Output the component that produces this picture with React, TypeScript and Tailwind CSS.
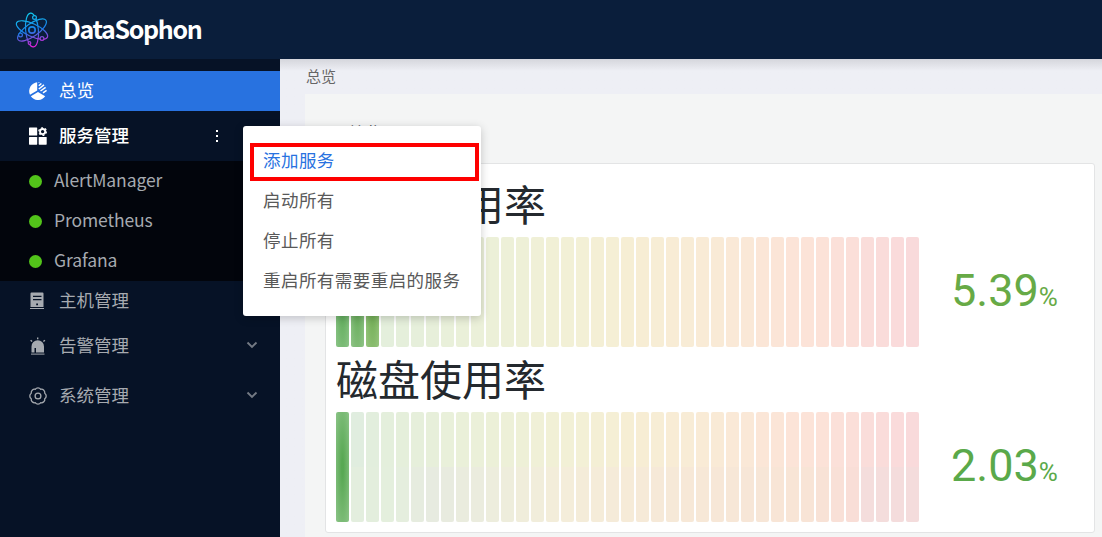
import type { ReactNode } from "react";

const CELL_COUNT = 39;

const TRACK = [
	[0, 222, 236, 224],
	[3, 228, 239, 220],
	[10, 236, 240, 216],
	[15, 242, 240, 214],
	[19, 246, 238, 212],
	[24, 249, 235, 214],
	[31, 252, 227, 216],
	[36, 250, 220, 218],
	[38, 249, 218, 219],
];

const TRACK_LOW = [
	[0, 226, 237, 222],
	[3, 228, 239, 221],
	[6, 231, 235, 224],
	[11, 238, 237, 220],
	[14, 243, 237, 218],
	[20, 246, 234, 216],
	[31, 248, 228, 214],
	[34, 249, 222, 215],
	[35, 244, 221, 220],
	[38, 244, 220, 220],
];

const LIT = [
	["#58a853", "#8cc487"],
	["#60a851", "#90c488"],
	["#69a94c", "#98c57e"],
];

const colorAt = (stops: number[][], index: number) => {
	const next = stops.findIndex((stop) => stop[0] >= index);
	const b = stops[next];
	const a = stops[Math.max(next - 1, 0)];
	const t = b[0] === a[0] ? 0 : (index - a[0]) / (b[0] - a[0]);
	const mix = [1, 2, 3].map((c) => Math.round(a[c] + (b[c] - a[c]) * t));
	return `rgb(${mix.join(",")})`;
};

const cellBackground = (index: number, lit: number, split: boolean) => {
	if (index < lit) {
		return `radial-gradient(${LIT[index][0]} 10%, ${LIT[index][1]})`;
	}
	const top = colorAt(TRACK, index);
	const low = split ? colorAt(TRACK_LOW, index) : top;
	return `linear-gradient(${top} 50%, ${low} 50%)`;
};

const Gauge = ({
	title,
	value,
	lit,
	split = false,
	color,
}: {
	title: string;
	value: string;
	lit: number;
	split?: boolean;
	color: string;
}) => {
	return (
		<div className="h-[175px]">
			<h3 className="h-[65px] text-[42px] leading-[61px] text-[#24292e]">
				{title}
			</h3>
			<div className="flex h-[110px]">
				<div className="flex gap-0.5">
					{Array.from({ length: CELL_COUNT }, (_, index) => (
						<div
							key={index}
							className="h-full w-[13px] rounded-xs"
							style={{ background: cellBackground(index, lit, split) }}
						/>
					))}
				</div>
				<div
					className="flex items-center pb-1 pl-8 font-[Roboto,sans-serif]"
					style={{ color }}
				>
					<div className="leading-none whitespace-nowrap">
						<span className="text-[45px]">{value}</span>
						<span className="text-[26px]">%</span>
					</div>
				</div>
			</div>
		</div>
	);
};

const Logo = () => (
	<svg width="36" height="38" viewBox="0 0 36 38" fill="none">
		<defs>
			<linearGradient id="atom" gradientUnits="userSpaceOnUse" x1="14" y1="2" x2="22" y2="36">
				<stop offset="0" stopColor="#12d0f2" />
				<stop offset="0.5" stopColor="#187fe8" />
				<stop offset="0.7" stopColor="#6657dc" />
				<stop offset="1" stopColor="#f51bdc" />
			</linearGradient>
			<mask id="orbits" maskUnits="userSpaceOnUse" x="0" y="0" width="36" height="38">
				<g stroke="#fff" strokeWidth="1.2">
					<ellipse cx="18" cy="19" rx="6.4" ry="17" transform="rotate(-5 18 19)" />
					<ellipse cx="18" cy="19" rx="6.4" ry="17" transform="rotate(55 18 19)" />
					<ellipse cx="18" cy="19" rx="6.4" ry="17" transform="rotate(115 18 19)" />
					<circle cx="18" cy="19" r="3.2" strokeWidth="1.7" />
					<circle cx="20.5" cy="6.500" r="1.9" fill="#000" />
					<circle cx="6.500" cy="24" r="1.9" fill="#000" />
					<circle cx="28" cy="27.500" r="1.9" fill="#000" />
					<circle cx="15.500" cy="32" r="1.3" fill="#000" />
				</g>
			</mask>
		</defs>
		<rect width="36" height="38" fill="url(#atom)" mask="url(#orbits)" />
	</svg>
);

const PieIcon = () => (
	<svg width="18" height="18" viewBox="0 0 18 18" fill="currentColor">
		<path d="M8.2.3v8.3L1 12.8A8.8 8.8 0 0 1 8.2.3Z" />
		<path d="M9 10.1 16.2 14.3A8.8 8.8 0 0 1 1.8 14.3Z" />
		<path
			d="M9.8 3.7 12.4 1.5M9.8 7 15 2.9M11.5 9 16.6 5.3M14 10.9 17.6 8.4M9.9 1V.4"
			fill="none"
			stroke="currentColor"
			strokeWidth="1.5"
		/>
	</svg>
);

const AppsIcon = () => (
	<svg width="18" height="18" viewBox="0 0 18 18" fill="currentColor">
		<rect x="0" y="0.5" width="8.2" height="8" rx="0.6" />
		<rect x="0" y="10" width="8.2" height="7.7" rx="0.6" />
		<rect x="9.7" y="10" width="8" height="7.7" rx="0.6" />
		<circle cx="13.6" cy="4.6" r="2.6" fill="none" stroke="currentColor" strokeWidth="1.8" />
		<circle
			cx="13.6"
			cy="4.6"
			r="3.8"
			fill="none"
			stroke="currentColor"
			strokeWidth="1.2"
			strokeDasharray="1.99 1.99"
		/>
	</svg>
);

const HostIcon = () => (
	<svg width="18" height="18" viewBox="0 0 18 18">
		<path
			fill="currentColor"
			fillRule="evenodd"
			d="M2.5.5h11a1 1 0 0 1 1 1v13.400H1.500V1.500a1 1 0 0 1 1-1ZM4 3.700v1.300h8.500V3.700ZM4 7v1.300h8.500V7ZM7.200 11.500v1.800H9v-1.800Z"
		/>
		<path fill="currentColor" d="M1 16h14v1H1z" />
	</svg>
);

const AlarmIcon = () => (
	<svg width="18" height="18" viewBox="0 0 18 18">
		<path
			fill="currentColor"
			fillRule="evenodd"
			d="M2.500 15.500V9.500a6 6 0 0 1 12.500 0v6H7V11H5.500v4.500Z"
		/>
		<path fill="currentColor" d="M2 16.600h13.500v1H2z" />
		<path
			stroke="currentColor"
			strokeWidth="1.4"
			d="M8.700.6v1.700M1.600 3.200l1.500 1.300M15.900 3.200l-1.500 1.300"
		/>
	</svg>
);

const GearIcon = () => (
	<svg width="18" height="18" viewBox="0 0 18 18" fill="none" stroke="currentColor" strokeWidth="1.3">
		<path
			strokeLinejoin="round"
			d="M15.740 11.790A3.400 3.400 0 0 1 11.790 15.740A3.400 3.400 0 0 1 6.210 15.740A3.400 3.400 0 0 1 2.260 11.790A3.400 3.400 0 0 1 2.260 6.210A3.400 3.400 0 0 1 6.210 2.260A3.400 3.400 0 0 1 11.790 2.260A3.400 3.400 0 0 1 15.740 6.210A3.400 3.400 0 0 1 15.740 11.790Z"
		/>
		<circle cx="9" cy="9" r="2.9" />
	</svg>
);

const Chevron = () => (
	<svg className="mr-[22px] mb-0.5 ml-auto" width="12" height="8" viewBox="0 0 12 8" fill="none">
		<path d="M1.500 1.500 6 6l4.500-4.500" stroke="#747a84" strokeWidth="1.9" />
	</svg>
);

const MenuItem = ({
	icon,
	label,
	className,
	children,
}: {
	icon: ReactNode;
	label: string;
	className: string;
	children?: ReactNode;
}) => (
	<div className={"flex items-center pl-[29px] text-[17.5px] " + className}>
		<span className="w-[30px]">{icon}</span>
		<span className="-mt-0.5 leading-none">{label}</span>
		{children}
	</div>
);

const SERVICES = ["AlertManager", "Prometheus", "Grafana"];

const Sidebar = () => (
	<nav className="w-[280px] shrink-0 bg-[#061226] pt-3 text-[#a6aab0]">
		<MenuItem icon={<PieIcon />} label="总览" className="h-10 bg-[#2872e0] text-white" />
		<MenuItem icon={<AppsIcon />} label="服务管理" className="h-[50px] font-medium text-white">
			<span className="mr-[62px] ml-auto flex flex-col gap-[3px]">
				<i className="size-0.5 bg-white" />
				<i className="size-0.5 bg-white" />
				<i className="size-0.5 bg-white" />
			</span>
		</MenuItem>
		<ul className="bg-[#02050c]">
			{SERVICES.map((service) => (
				<li key={service} className="flex h-10 items-center pl-[29px] text-[17.5px]">
					<span className="mt-px mr-3 size-[13px] rounded-full bg-[#52c41a]" />
					<span className="-mt-0.5 leading-none tracking-[-0.1px]">{service}</span>
				</li>
			))}
		</ul>
		<MenuItem icon={<HostIcon />} label="主机管理" className="h-10" />
		<MenuItem icon={<AlarmIcon />} label="告警管理" className="h-[50px]">
			<Chevron />
		</MenuItem>
		<MenuItem icon={<GearIcon />} label="系统管理" className="h-[50px]">
			<Chevron />
		</MenuItem>
	</nav>
);

const ACTIONS = ["启动所有", "停止所有", "重启所有需要重启的服务"];

const ServiceMenu = () => (
	<div className="absolute top-[126px] left-[243px] h-[190px] w-[238px] rounded-[3px] bg-white pt-[17px] text-[17.5px] tracking-[0.45px] text-[#595959] shadow-[0_2px_10px_rgba(0,0,0,0.2)]">
		<div className="ml-[7px] flex h-[38px] w-[229px] items-center border-4 border-[#fe0000] pl-[9px] text-[#2872e0]">
			<span className="-mt-1 leading-none">添加服务</span>
		</div>
		<ul className="-mt-px">
			{ACTIONS.map((action) => (
				<li key={action} className="flex h-10 items-center pl-5 leading-none">
					{action}
				</li>
			))}
		</ul>
	</div>
);

export default function App() {
	return (
		<div className="relative flex h-[537px] w-[1102px] flex-col overflow-hidden bg-[#eeeff5] font-['Noto_Sans_CJK_SC',sans-serif]">
			<header className="flex h-[59px] shrink-0 items-center bg-[#0a1e3b] pl-3.5">
				<Logo />
				<h1 className="-mt-0.5 ml-[13px] text-[25px] leading-none font-bold tracking-[-1.35px] text-white">
					DataSophon
				</h1>
			</header>
			<div className="flex min-h-0 flex-1">
				<Sidebar />
				<main className="flex flex-1 flex-col bg-linear-to-b from-[#d5d6dc] to-[#eeeff5] to-[12px] pl-[25px]">
					<div className="h-[35px] shrink-0 pt-[9px] pl-px text-[15px] leading-none text-[#666]">
						总览
					</div>
					<section className="flex-1 bg-[#f4f5f5] pl-5">
						<h2 className="h-[69px] pt-[30px] pl-[22px] text-[17.5px] leading-none text-[#24292e]">
							总览
						</h2>
						<div className="h-[370px] w-[770px] rounded-[3px] border border-[#e3e4e5] bg-white pt-2 pl-2.5">
							<Gauge title="内存使用率" value="5.39" lit={3} color="#67aa46" />
							<Gauge title="磁盘使用率" value="2.03" lit={1} split color="#5aa94a" />
						</div>
					</section>
				</main>
			</div>
			<ServiceMenu />
		</div>
	);
}
